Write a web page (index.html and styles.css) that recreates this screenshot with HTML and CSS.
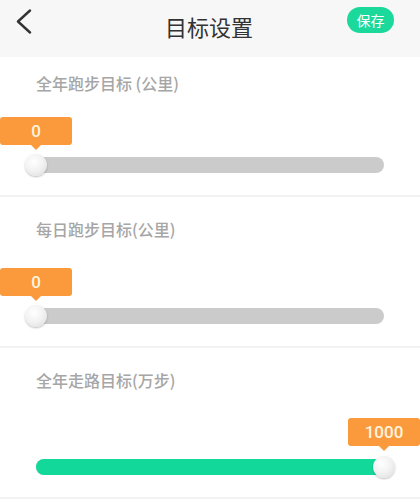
FILE: index.html
```html
<!DOCTYPE html>
<html lang="zh-CN">
<head>
<meta charset="utf-8">
<title>目标设置</title>
<link rel="stylesheet" href="styles.css">
</head>
<body>
<div class="page">
  <header class="header">
    <div class="back">
      <svg width="18" height="26" viewBox="0 0 18 26"><polyline points="15,1.5 3,12.5 15,23.5" fill="none" stroke="#333" stroke-width="2.4" stroke-linecap="round" stroke-linejoin="round"/></svg>
    </div>
    <div class="title">目标设置</div>
    <button class="save">保存</button>
  </header>

  <section class="section section-first">
    <div class="label">全年跑步目标 (公里)</div>
    <div class="slider">
      <div class="track">
        <div class="fill" style="width:0%"></div>
        <div class="thumb" style="left:0%"></div>
        <div class="tip" style="left:0%">0</div>
      </div>
    </div>
  </section>

  <section class="section">
    <div class="label">每日跑步目标(公里)</div>
    <div class="slider">
      <div class="track">
        <div class="fill" style="width:0%"></div>
        <div class="thumb" style="left:0%"></div>
        <div class="tip" style="left:0%">0</div>
      </div>
    </div>
  </section>

  <section class="section">
    <div class="label">全年走路目标(万步)</div>
    <div class="slider">
      <div class="track">
        <div class="fill" style="width:100%"></div>
        <div class="thumb" style="left:100%"></div>
        <div class="tip tip-high" style="left:100%">1000</div>
      </div>
    </div>
  </section>
</div>
</body>
</html>
```
FILE: styles.css
```css
* { box-sizing: border-box; }
html, body { margin: 0; padding: 0; background: #fff; }
body { font-family: "Noto Sans CJK SC", "Noto Sans", sans-serif; }
.page { width: 420px; }

.header {
  height: 57px;
  background: #f7f7f7;
  display: flex;
  align-items: flex-start;
  padding: 0 26px 0 15px;
}
.back { margin-top: 9px; width: 18px; height: 26px; flex: none; }
.back svg { display: block; }
.title {
  flex: 1;
  margin-top: 10px;
  font-size: 22px;
  line-height: 32px;
  font-weight: 400;
  color: #333;
  text-align: center;
  padding-left: 38px;
}
.save {
  flex: none;
  margin-top: 7px;
  width: 47px;
  height: 26px;
  border: none;
  border-radius: 13px;
  background: #1bd89b;
  color: #fff;
  font-family: "Noto Sans CJK SC", sans-serif;
  font-size: 14px;
  line-height: 26px;
  padding: 0;
}

.section {
  padding: 22px 0 22px;
  border-bottom: 2px solid #f2f2f2;
}
.section-first { padding-top: 16px; }
.label {
  margin-left: 36px;
  font-size: 16px;
  line-height: 20px;
  font-weight: 500;
  color: #a6a6a6;
}
.slider { margin: 69px 36px 0 36px; }
.section-first .slider { margin-top: 64px; }
.track {
  position: relative;
  height: 16px;
  border-radius: 8px;
  background: #cbcbcb;
}
.fill {
  height: 16px;
  border-radius: 8px;
  background: #12d99a;
}
.thumb {
  position: absolute;
  top: -3px;
  width: 22px;
  height: 22px;
  margin-left: -11px;
  border-radius: 50%;
  background: radial-gradient(circle at 40% 35%, #ffffff 0%, #f1f1f1 50%, #d9d9d9 100%);
  box-shadow: 0 1px 2px rgba(0,0,0,0.25);
}
.tip {
  position: absolute;
  top: -40px;
  width: 72px;
  height: 28px;
  margin-left: -36px;
  border-radius: 3px;
  background: #fb9a3c;
  color: #fff4de;
  font-family: Roboto, "Noto Sans", sans-serif;
  font-weight: 500;
  font-size: 17px;
  line-height: 28px;
  text-align: center;
}
.tip-high { top: -41px; }
.tip::after {
  content: "";
  position: absolute;
  left: 50%;
  bottom: -5px;
  margin-left: -5px;
  border-left: 5px solid transparent;
  border-right: 5px solid transparent;
  border-top: 5px solid #fb9a3c;
}
```
